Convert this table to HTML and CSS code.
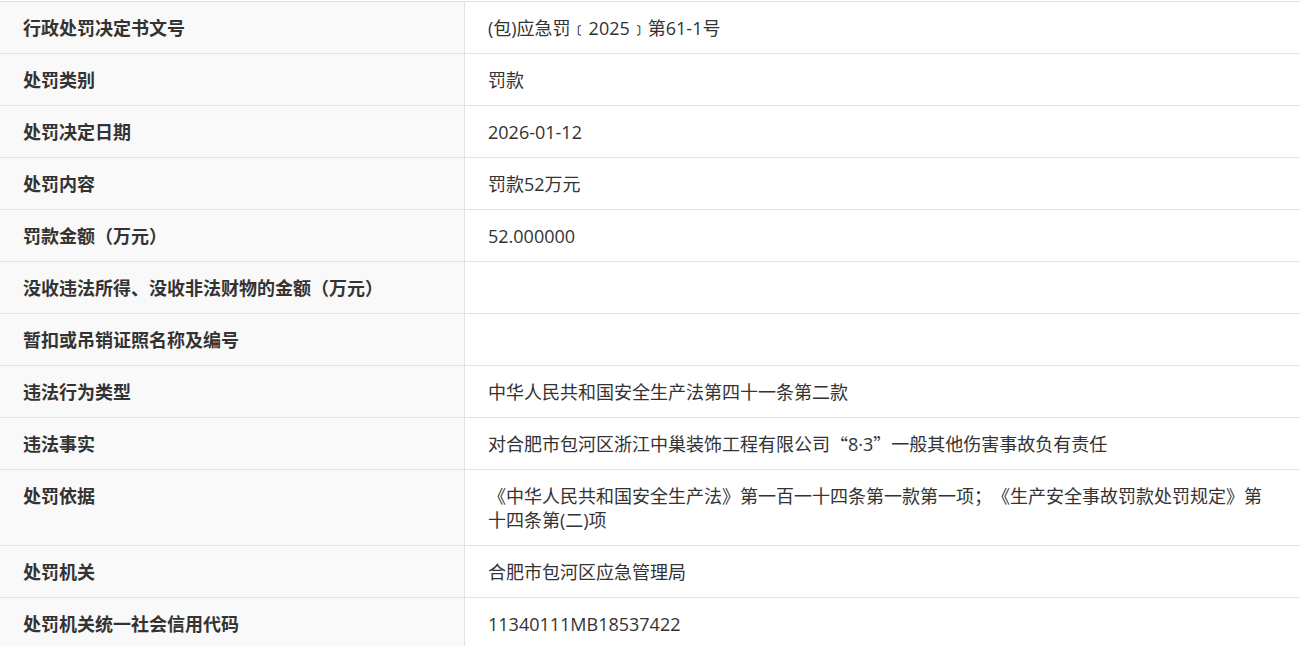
FILE: index.html
```html
<!DOCTYPE html>
<html lang="zh-CN">
<head>
<meta charset="utf-8">
<title>行政处罚信息</title>
<link rel="stylesheet" href="styles.css">
</head>
<body>
<table class="info-table">
  <tbody>
    <tr><th>行政处罚决定书文号</th><td>(包)应急罚﹝2025﹞第61-1号</td></tr>
    <tr><th>处罚类别</th><td>罚款</td></tr>
    <tr><th>处罚决定日期</th><td>2026-01-12</td></tr>
    <tr><th>处罚内容</th><td>罚款52万元</td></tr>
    <tr><th>罚款金额（万元）</th><td>52.000000</td></tr>
    <tr><th>没收违法所得、没收非法财物的金额（万元）</th><td></td></tr>
    <tr><th>暂扣或吊销证照名称及编号</th><td></td></tr>
    <tr><th>违法行为类型</th><td>中华人民共和国安全生产法第四十一条第二款</td></tr>
    <tr><th>违法事实</th><td>对合肥市包河区浙江中巢装饰工程有限公司<span class="cjk">“</span>8·3<span class="cjk">”</span>一般其他伤害事故负有责任</td></tr>
    <tr><th>处罚依据</th><td>《中华人民共和国安全生产法》第一百一十四条第一款第一项；《生产安全事故罚款处罚规定》第十四条第(二)项</td></tr>
    <tr><th>处罚机关</th><td>合肥市包河区应急管理局</td></tr>
    <tr><th>处罚机关统一社会信用代码</th><td>11340111MB18537422</td></tr>
  </tbody>
</table>
</body>
</html>
```

FILE: styles.css
```css
html, body {
  margin: 0;
  padding: 0;
  background: #ffffff;
}
body {
  padding-top: 1px;
  font-family: "Open Sans", "Noto Sans CJK SC", sans-serif;
  font-size: 18px;
  line-height: 24px;
  color: #333333;
  text-spacing-trim: space-all;
}
.info-table {
  width: 1300px;
  border-collapse: collapse;
  table-layout: fixed;
  border-top: 1px solid #e3e3e3;
}
.info-table tr {
  border-bottom: 1px solid #e3e3e3;
}
.info-table th {
  width: 418px;
  padding: 14px 23px 13px 23px;
  background: #f9f9f9;
  border-right: 1px solid #e3e3e3;
  text-align: left;
  vertical-align: top;
  font-weight: 700;
  color: #333333;
}
.info-table td {
  padding: 14px 23px 13px 23px;
  vertical-align: top;
  font-weight: 400;
  color: #333333;
}
.cjk {
  font-family: "Noto Sans CJK SC", sans-serif;
  vertical-align: top;
}
```
